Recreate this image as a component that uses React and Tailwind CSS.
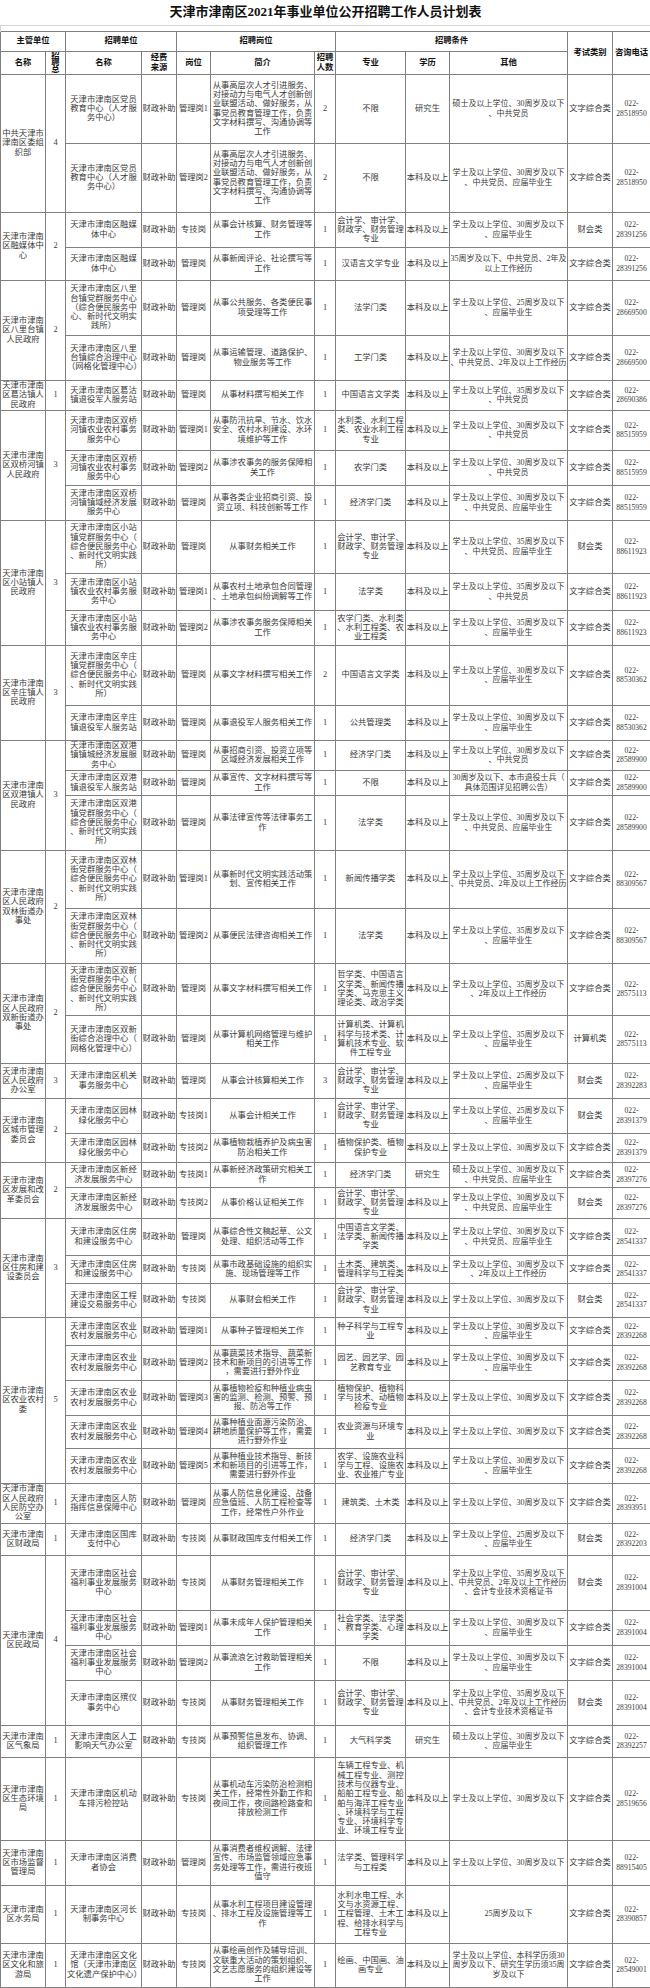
import React from 'react';

const INTRO1 = '从事高层次人才引进服务、对接动力与电气人才创新创业联盟活动、做好服务，从事党员教育管理工作，负责文字材料撰写、沟通协调等工作';
const KJ = '会计学、审计学、财政学、财务管理专业';
const NY = '天津市津南区农业农村发展服务中心';
const FL = '天津市津南区社会福利事业发展服务中心';

// [名称, 岗位, 简介, 人数, 专业, 学历, 其他, 考试类别, 电话, 行高]
const groups = [
  { unit: '中共天津市津南区委组织部', total: 4, rows: [
    ['天津市津南区党员教育中心（人才服务中心）', '管理岗1', INTRO1, '2', '不限', '研究生', '硕士及以上学位、30周岁及以下、中共党员', '文字综合类', '022-28518950', 'h-[69px]'],
    ['天津市津南区党员教育中心（人才服务中心）', '管理岗2', INTRO1, '2', '不限', '本科及以上', '学士及以上学位、30周岁及以下、中共党员、应届毕业生', '文字综合类', '022-28518950', 'h-[69px]'],
  ] },
  { unit: '天津市津南区融媒体中心', total: 2, rows: [
    ['天津市津南区融媒体中心', '专技岗', '从事会计核算、财务管理等工作', '1', KJ, '本科及以上', '学士及以上学位、30周岁及以下、应届毕业生', '财会类', '022-28391256', 'h-[35px]'],
    ['天津市津南区融媒体中心', '管理岗', '从事新闻评论、社论撰写等工作', '1', '汉语言文学专业', '本科及以上', '35周岁及以下、中共党员、2年及以上工作经历', '文字综合类', '022-28391256', 'h-[33px]'],
  ] },
  { unit: '天津市津南区八里台镇人民政府', total: 2, rows: [
    ['天津市津南区八里台镇党群服务中心（综合便民服务中心、新时代文明实践所）', '管理岗', '从事公共服务、各类便民事项受理等工作', '1', '法学门类', '本科及以上', '学士及以上学位、25周岁及以下、应届毕业生', '文字综合类', '022-28669500', 'h-[55px]'],
    ['天津市津南区八里台镇综合治理中心（网格化管理中心）', '管理岗', '从事运输管理、道路保护、物业服务等工作', '1', '工学门类', '本科及以上', '学士及以上学位、30周岁及以下、中共党员、2年及以上工作经历', '文字综合类', '022-28669500', 'h-[45px]'],
  ] },
  { unit: '天津市津南区葛沽镇人民政府', total: 1, rows: [
    ['天津市津南区葛沽镇退役军人服务站', '管理岗', '从事材料撰写相关工作', '1', '中国语言文学类', '本科及以上', '学士及以上学位、35周岁及以下、中共党员', '文字综合类', '022-28690386', 'h-[30px]'],
  ] },
  { unit: '天津市津南区双桥河镇人民政府', total: 3, rows: [
    ['天津市津南区双桥河镇农业农村事务服务中心', '管理岗1', '从事防汛抗旱、节水、饮水安全、农村水利建设、水环境维护等工作', '1', '水利类、水利工程类、农业水利工程专业', '本科及以上', '学士及以上学位、30周岁及以下、中共党员', '文字综合类', '022-88515959', 'h-[40px]'],
    ['天津市津南区双桥河镇农业农村事务服务中心', '管理岗2', '从事涉农事务的服务保障相关工作', '1', '农学门类', '本科及以上', '学士及以上学位、30周岁及以下、中共党员', '文字综合类', '022-88515959', 'h-[35px]'],
    ['天津市津南区双桥河镇镇域经济发展服务中心', '管理岗', '从事各类企业招商引资、投资立项、科技创新等工作', '1', '经济学门类', '本科及以上', '学士及以上学位、30周岁及以下、中共党员、应届毕业生', '文字综合类', '022-88515959', 'h-[35px]'],
  ] },
  { unit: '天津市津南区小站镇人民政府', total: 3, rows: [
    ['天津市津南区小站镇党群服务中心（综合便民服务中心、新时代文明实践所）', '管理岗', '从事财务相关工作', '1', KJ, '本科及以上', '学士及以上学位、35周岁及以下、中共党员、应届毕业生', '财会类', '022-88611923', 'h-[53px]'],
    ['天津市津南区小站镇农业农村事务服务中心', '管理岗1', '从事农村土地承包合同管理、土地承包纠纷调解等工作', '1', '法学类', '本科及以上', '学士及以上学位、35周岁及以下、中共党员', '文字综合类', '022-88611923', 'h-[37px]'],
    ['天津市津南区小站镇农业农村事务服务中心', '管理岗2', '从事涉农事务服务保障相关工作', '1', '农学门类、水利类、水利工程类、农业工程类', '本科及以上', '学士及以上学位、35周岁及以下、应届毕业生', '文字综合类', '022-88611923', 'h-[35px]'],
  ] },
  { unit: '天津市津南区辛庄镇人民政府', total: 3, rows: [
    ['天津市津南区辛庄镇党群服务中心（综合便民服务中心、新时代文明实践所）', '管理岗', '从事文字材料撰写相关工作', '2', '中国语言文学类', '本科及以上', '学士及以上学位、30周岁及以下、应届毕业生', '文字综合类', '022-88530362', 'h-[60px]'],
    ['天津市津南区辛庄镇退役军人服务站', '管理岗', '从事退役军人服务相关工作', '1', '公共管理类', '本科及以上', '学士及以上学位、30周岁及以下、应届毕业生', '文字综合类', '022-88530362', 'h-[35px]'],
  ] },
  { unit: '天津市津南区双港镇人民政府', total: 3, rows: [
    ['天津市津南区双港镇镇城经济发展服务中心', '管理岗', '从事招商引资、投资立项等区域经济发展相关工作', '1', '经济学门类', '本科及以上', '学士及以上学位、30周岁及以下、中共党员', '文字综合类', '022-28589900', 'h-[30px]'],
    ['天津市津南区双港镇退役军人服务站', '管理岗', '从事宣传、文字材料撰写等工作', '1', '不限', '本科及以上', '30周岁及以下、本市退役士兵（具体范围详见招聘公告）', '文字综合类', '022-28589900', 'h-[25px]'],
    ['天津市津南区双港镇党群服务中心（综合便民服务中心、新时代文明实践所）', '管理岗', '从事法律宣传等法律事务工作', '1', '法学类', '本科及以上', '学士及以上学位、30周岁及以下、中共党员、应届毕业生', '文字综合类', '022-28589900', 'h-[55px]'],
  ] },
  { unit: '天津市津南区人民政府双林街道办事处', total: 2, rows: [
    ['天津市津南区双林街党群服务中心（综合便民服务中心、新时代文明实践所）', '管理岗1', '从事新时代文明实践活动策划、宣传相关工作', '1', '新闻传播学类', '本科及以上', '学士及以上学位、35周岁及以下、中共党员、2年及以上工作经历', '文字综合类', '022-88309567', 'h-[58px]'],
    ['天津市津南区双林街党群服务中心（综合便民服务中心、新时代文明实践所）', '管理岗2', '从事便民法律咨询相关工作', '1', '法学类', '本科及以上', '学士及以上学位、35周岁及以下、应届毕业生', '文字综合类', '022-88309567', 'h-[55px]'],
  ] },
  { unit: '天津市津南区人民政府双新街道办事处', total: 2, rows: [
    ['天津市津南区双新街党群服务中心（综合便民服务中心、新时代文明实践所）', '管理岗', '从事文字材料撰写相关工作', '1', '哲学类、中国语言文学类、新闻传播学类、马克思主义理论类、政治学类', '本科及以上', '学士及以上学位、35周岁及以下、2年及以上工作经历', '文字综合类', '022-28575113', 'h-[52px]'],
    ['天津市津南区双新街综合治理中心（网格化管理中心）', '管理岗', '从事计算机网络管理与维护相关工作', '1', '计算机类、计算机科学与技术类、计算机技术专业、软件工程专业', '本科及以上', '学士及以上学位、35周岁及以下、应届毕业生', '计算机类', '022-28575113', 'h-[48px]'],
  ] },
  { unit: '天津市津南区人民政府办公室', total: 3, rows: [
    ['天津市津南区机关事务服务中心', '管理岗', '从事会计核算相关工作', '3', KJ, '本科及以上', '学士及以上学位、25周岁及以下、应届毕业生', '财会类', '022-28392283', 'h-[35px]'],
  ] },
  { unit: '天津市津南区城市管理委员会', total: 2, rows: [
    ['天津市津南区园林绿化服务中心', '专技岗1', '从事会计相关工作', '1', KJ, '本科及以上', '学士及以上学位、25周岁及以下、应届毕业生', '财会类', '022-28391379', 'h-[35px]'],
    ['天津市津南区园林绿化服务中心', '专技岗2', '从事植物栽植养护及病虫害防治相关工作', '1', '植物保护类、植物保护专业', '本科及以上', '学士及以上学位、30周岁及以下', '文字综合类', '022-28391379', 'h-[29px]'],
  ] },
  { unit: '天津市津南区发展和改革委员会', total: 2, rows: [
    ['天津市津南区新经济发展服务中心', '专技岗1', '从事新经济政策研究相关工作', '1', '经济学门类', '研究生', '硕士及以上学位、30周岁及以下、中共党员、应届毕业生', '文字综合类', '022-28397276', 'h-[25px]'],
    ['天津市津南区新经济发展服务中心', '专技岗2', '从事价格认证相关工作', '1', KJ, '本科及以上', '学士及以上学位、30周岁及以下、中共党员、应届毕业生', '财会类', '022-28397276', 'h-[31px]'],
  ] },
  { unit: '天津市津南区住房和建设委员会', total: 3, rows: [
    ['天津市津南区住房和建设服务中心', '管理岗', '从事综合性文稿起草、公文处理、组织活动等工作', '1', '中国语言文学类、法学类、新闻传播学类', '本科及以上', '学士及以上学位、30周岁及以下、中共党员、应届毕业生', '文字综合类', '022-28541337', 'h-[37px]'],
    ['天津市津南区住房和建设服务中心', '专技岗', '从事市政基础设施的组织实施、现场管理等工作', '1', '土木类、建筑类、管理科学与工程类', '本科及以上', '学士及以上学位、30周岁及以下、2年及以上工作经历', '文字综合类', '022-28541337', 'h-[28px]'],
    ['天津市津南区工程建设交易服务中心', '专技岗', '从事财会相关工作', '1', KJ, '本科及以上', '学士及以上学位、30周岁及以下', '财会类', '022-28541337', 'h-[34px]'],
  ] },
  { unit: '天津市津南区农业农村委', total: 5, rows: [
    [NY, '管理岗1', '从事种子管理相关工作', '1', '种子科学与工程专业', '本科及以上', '学士及以上学位、30周岁及以下、应届毕业生', '文字综合类', '022-28392268', 'h-[28px]'],
    [NY, '管理岗2', '从事蔬菜技术指导、蔬菜新技术和新项目的引进等工作，需要进行野外作业', '1', '园艺、园艺学、园艺教育专业', '本科及以上', '学士及以上学位、30周岁及以下、应届毕业生', '文字综合类', '022-28392268', 'h-[35px]'],
    [NY, '管理岗3', '从事植物检疫和种植业病虫害的监测、检测、预警、预报、防治等工作', '1', '植物保护、植物科学与技术、动植物检疫专业', '本科及以上', '学士及以上学位、30周岁及以下', '文字综合类', '022-28392268', 'h-[35px]'],
    [NY, '管理岗4', '从事种植业面源污染防治、耕地质量保护等工作，需要进行野外作业', '1', '农业资源与环境专业', '本科及以上', '学士及以上学位、30周岁及以下', '文字综合类', '022-28392268', 'h-[33px]'],
    [NY, '管理岗5', '从事种植业技术指导、新技术和新项目的引进等工作，需要进行野外作业', '1', '农学、设施农业科学与工程、设施农业、农业推广专业', '本科及以上', '学士及以上学位、30周岁及以下、应届毕业生', '文字综合类', '022-28392268', 'h-[35px]'],
  ] },
  { unit: '天津市津南区人民政府人民防空办公室', total: 1, rows: [
    ['天津市津南区人防指挥信息保障中心', '管理岗', '从事人防信息化建设、战备应急值班、人防工程检查等工作，经常性户外作业', '1', '建筑类、土木类', '本科及以上', '学士及以上学位、30周岁及以下', '文字综合类', '022-28393951', 'h-[40px]'],
  ] },
  { unit: '天津市津南区财政局', total: 1, rows: [
    ['天津市津南区国库支付中心', '专技岗', '从事财政国库支付相关工作', '1', '经济学门类', '本科及以上', '学士及以上学位、25周岁及以下、应届毕业生', '财会类', '022-28392203', 'h-[32px]'],
  ] },
  { unit: '天津市津南区民政局', total: 4, rows: [
    [FL, '专技岗', '从事财务管理相关工作', '1', KJ, '本科及以上', '学士及以上学位、35周岁及以下、中共党员、2年及以上工作经历、会计专业技术资格证书', '财会类', '022-28391004', 'h-[55px]'],
    [FL, '管理岗1', '从事未成年人保护管理相关工作', '1', '社会学类、法学类、教育学类、心理学类', '本科及以上', '学士及以上学位、30周岁及以下、应届毕业生', '文字综合类', '022-28391004', 'h-[35px]'],
    [FL, '管理岗2', '从事流浪乞讨救助管理相关工作', '1', '不限', '本科及以上', '学士及以上学位、30周岁及以下、应届毕业生', '文字综合类', '022-28391004', 'h-[35px]'],
    ['天津市津南区殡仪事务中心', '专技岗', '从事财务管理相关工作', '1', KJ, '本科及以上', '学士及以上学位、35周岁及以下、中共党员、2年及以上工作经历、会计专业技术资格证书', '财会类', '022-28391004', 'h-[45px]'],
  ] },
  { unit: '天津市津南区气象局', total: 1, rows: [
    ['天津市津南区人工影响天气办公室', '专技岗', '从事预警信息发布、协调、组织管理工作', '1', '大气科学类', '研究生', '硕士及以上学位、30周岁及以下、应届毕业生', '文字综合类', '022-28392257', 'h-[32px]'],
  ] },
  { unit: '天津市津南区生态环境局', total: 1, rows: [
    ['天津市津南区机动车排污检控站', '专技岗', '从事机动车污染防治检测相关工作，经常性外勤工作和夜间工作，夜间路检路查和排放检测工作', '1', '车辆工程专业、机械工程专业、测控技术与仪器专业、船舶工程专业、船舶与海洋工程专业、环境科学与工程专业、环境科学专业、环境工程专业', '本科及以上', '学士及以上学位、30周岁及以下', '文字综合类', '022-28519656', 'h-[83px]'],
  ] },
  { unit: '天津市津南区市场监督管理局', total: 1, rows: [
    ['天津市津南区消费者协会', '管理岗', '从事消费者维权调解、法律宣传、市场监管领域应急事务处理等工作，需进行夜班值守', '1', '法学类、管理科学与工程类', '本科及以上', '学士及以上学位、30周岁及以下', '文字综合类', '022-88915405', 'h-[45px]'],
  ] },
  { unit: '天津市津南区水务局', total: 1, rows: [
    ['天津市津南区河长制事务中心', '专技岗', '从事水利工程项目建设管理、排水工程及设施管理等工作', '1', '水利水电工程、水文与水资源工程、工程管理、土木工程、给排水科学与工程专业', '本科及以上', '25周岁及以下', '文字综合类', '022-28390857', 'h-[58px]'],
  ] },
  { unit: '天津市津南区文化和旅游局', total: 1, rows: [
    ['天津市津南区文化馆（天津市津南区文化遗产保护中心）', '专技岗', '从事绘画创作及辅导培训、文联重大活动的策划组织、文艺志愿服务的组织建设等工作', '1', '绘画、中国画、油画专业', '本科及以上', '学士及以上学位、本科学历须30周岁及以下、研究生学历须35周岁及以下', '文字综合类', '022-28549001', 'h-[44px]'],
  ] },
];

function Td({ children, className = '', ...rest }) {
  return (
    <td
      {...rest}
      className={`border border-[#808080] text-center align-middle [line-break:anywhere] ${className}`}
    >
      {children}
    </td>
  );
}

function Th({ children, className = '', ...rest }) {
  return (
    <td
      {...rest}
      className={`border border-[#808080] px-px text-center align-middle font-bold text-[#111] ${className}`}
    >
      {children}
    </td>
  );
}

function Phone({ value }) {
  const [a, b] = value.split('-');
  return (
    <>
      {a}-<br />{b}
    </>
  );
}

export default function App() {
  return (
    <div className="w-[650px] bg-white font-['Liberation_Serif','Noto_Sans_CJK_SC',serif] text-[8.3px] leading-[9.3px] text-[#3a3a3a]">
      <table className="w-[650px] table-fixed border-collapse">
        <colgroup>
          <col className="w-[45px]" />
          <col className="w-[20px]" />
          <col className="w-[76px]" />
          <col className="w-[35px]" />
          <col className="w-[34px]" />
          <col className="w-[104px]" />
          <col className="w-[21px]" />
          <col className="w-[70px]" />
          <col className="w-[44px]" />
          <col className="w-[118px]" />
          <col className="w-[45px]" />
          <col className="w-[38px]" />
        </colgroup>
        <tbody>
          {/* ─── Title ─── */}
          <tr className="h-[25px]">
            <td colSpan={12} className="text-center align-middle text-[13px] leading-[16px] font-bold text-[#111]">
              天津市津南区2021年事业单位公开招聘工作人员计划表
            </td>
          </tr>
          <tr className="h-[6px]">
            <td colSpan={12} className="border-t border-l border-[#d4d4d4]"></td>
          </tr>

          {/* ─── Header ─── */}
          <tr className="h-[20px]">
            <Th colSpan={2}>主管单位</Th>
            <Th colSpan={2}>招聘单位</Th>
            <Th colSpan={3}>招聘岗位</Th>
            <Th colSpan={3}>招聘条件</Th>
            <Th rowSpan={2}>考试类别</Th>
            <Th rowSpan={2}>咨询电话</Th>
          </tr>
          <tr className="h-[23px]">
            <Th>名称</Th>
            <Th className="leading-[7px]">
              <div className="h-[21px] overflow-hidden">招<br />聘<br />总</div>
            </Th>
            <Th>名称</Th>
            <Th>经费<br />来源</Th>
            <Th>岗位</Th>
            <Th>简介</Th>
            <Th>招聘<br />人数</Th>
            <Th>专业</Th>
            <Th>学历</Th>
            <Th>其他</Th>
          </tr>

          {/* ─── Rows ─── */}
          {groups.map((g) =>
            g.rows.map((r, i) => (
              <tr key={g.unit + i} className={r[9]}>
                {i === 0 && (
                  <>
                    <Td rowSpan={g.rows.length} className="px-px">{g.unit}</Td>
                    <Td rowSpan={g.rows.length}>{g.total}</Td>
                  </>
                )}
                <Td className="px-px">{r[0]}</Td>
                <Td className="whitespace-nowrap">财政补助</Td>
                <Td className="whitespace-nowrap">{r[1]}</Td>
                <Td className="px-px">{r[2]}</Td>
                <Td>{r[3]}</Td>
                <Td>{r[4]}</Td>
                <Td className="whitespace-nowrap">{r[5]}</Td>
                <Td className="text-[8px]">{r[6]}</Td>
                <Td className="whitespace-nowrap">{r[7]}</Td>
                <Td className="text-[7.6px]"><Phone value={r[8]} /></Td>
              </tr>
            ))
          )}
        </tbody>
      </table>
    </div>
  );
}
